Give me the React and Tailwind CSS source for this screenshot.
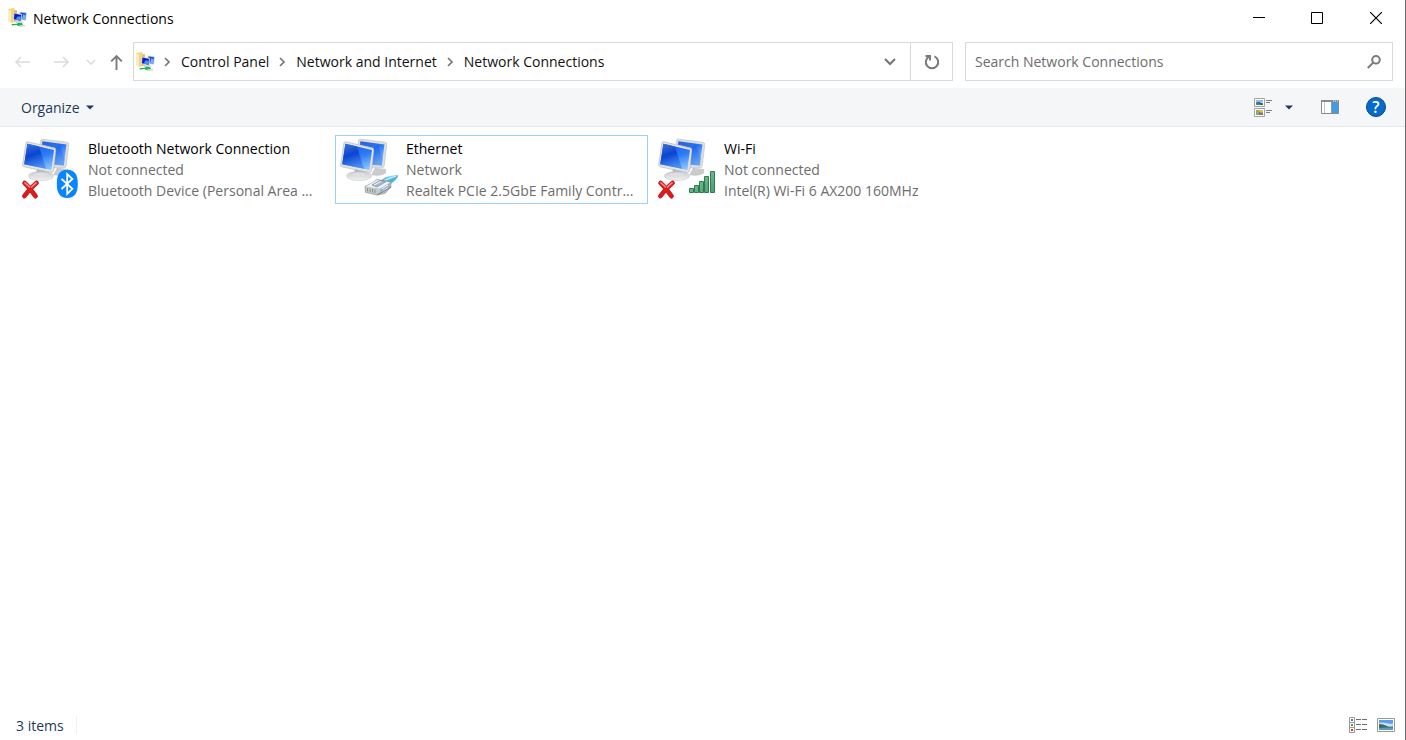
import React from "react";

function Monitors() {
  return (
    <g>
      <path d="M37 31 L48 32 L48 36 Q43 40 33 38 Z" fill="#c9cbcd" />
      <path d="M20.5 3 Q21 1.8 23 2.2 L47 5.2 Q49 5.6 48.8 7.5 L46.3 28.5 Q46 31 43 31 L33 31 L28 10 L20 8 Z" fill="#dcddde" stroke="#b4b6b8" strokeWidth=".5" />
      <path d="M22.4 4.2 L46.4 7.6 L43.8 28.4 L34 27.8 L35.5 11 L22 7.8 Z" fill="url(#backScreen)" />
      <path d="M36 11 L40 6.8 L44.6 22 L43.8 28.4 L34.4 27.8 Z" fill="#0f4ee0" opacity=".3" />
      <path d="M17 31 L26 33 L26.5 39 L16 38 Z" fill="#b0b2b4" />
      <ellipse cx="21" cy="39" rx="12.5" ry="4.6" fill="url(#stand)" stroke="#c0c2c4" strokeWidth=".5" />
      <ellipse cx="21" cy="37.4" rx="7" ry="1.7" fill="#dfe0e1" />
      <path d="M6 5.6 Q6.5 4.3 8 4.8 L34 11 Q36 11.5 35.8 13.5 L33.5 33.8 Q33 36 30.8 35.4 L4 29.8 Q2.3 29.2 2.6 27.6 Z" fill="#e3e4e5" stroke="#b0b2b4" strokeWidth=".6" />
      <path d="M7.4 6.8 L34 13 L31.4 33 L4.2 27.2 Z" fill="url(#frontScreen)" />
      <path d="M7.4 6.8 L19 9.6 L26 31.8 L4.2 27.2 Z" fill="url(#sheen)" />
    </g>
  );
}

function RedCross() {
  return (
    <g strokeLinecap="round" fill="none">
      <path d="M4.6 46 Q9 50 15.5 59.2 M16.5 46 Q10 51 4.4 59" stroke="#bb1a1a" strokeWidth="4.6" />
      <path d="M4.6 46 Q9 50 15.5 59.2 M16.5 46 Q10 51 4.4 59" stroke="#dc1c1c" strokeWidth="3.6" />
      <path d="M5 45.8 L9.5 50 M16 45.8 L11.5 50" stroke="#f28a8a" strokeWidth="1.6" />
    </g>
  );
}

function ConnectionIcon({ kind }) {
  return (
    <svg viewBox="0 0 60 64" className="mt-px h-16 w-15 shrink-0 self-start" aria-hidden="true">
      <Monitors />
      {kind !== "ethernet" && <RedCross />}
      {kind === "bluetooth" && (
        <g>
          <path d="M47.2 32.7 C55 32.7 57.8 38 57.8 46.8 S55 61 47.2 61 S36.8 55.5 36.8 46.8 S39.2 32.7 47.2 32.7 Z" fill="#0a84ff" />
          <path d="M41.5 41.8 L52.4 51.8 L47.2 56.8 V37 L52.4 42 L41.5 52" fill="none" stroke="#fff" strokeWidth="1.8" />
        </g>
      )}
      {kind === "ethernet" && (
        <g strokeLinejoin="round">
          <path d="M43 44 Q46 40 52 39.4 L61 38 L57.5 43 L50 49 Z" fill="#4db7dd" stroke="#8cc6da" strokeWidth=".6" />
          <path d="M46 43.6 L52 41 L58 39.2" fill="none" stroke="#c4f0fb" strokeWidth="1.4" />
          <path d="M27 49.4 L33 46.5 L39 42.5 L52.5 44.8 L53 50 L47 56.4 L39 58 L27.4 55.2 Z" fill="#c3c9d0" stroke="#8d959e" strokeWidth=".7" />
          <path d="M28 49.6 L39 43 L52 45.4 L42 51.6 Z" fill="#eff1f4" />
          <path d="M42 52 L52 46 L52.2 49.6 L46.6 55.6 L42.5 56.6 Z" fill="#a5b4c4" />
          <path d="M34 48 L42 43.4 L48 44.6 L39 50 Z" fill="#a9b8c9" stroke="#71808f" strokeWidth=".6" />
          <path d="M36 48 L43 44.4" stroke="#f7f9fb" strokeWidth="1" />
          <path d="M29.5 51 V54.4 M32 51.5 V55 M34.5 52 V55.5 M37 52.5 V56" stroke="#8c9663" strokeWidth="1" />
          <path d="M44 51.8 L50 48 M44.5 54.6 L50 50.6" stroke="#f4f7fa" strokeWidth="1" />
          <path d="M39 58 L53 50" stroke="#5a6a7c" strokeWidth=".7" />
        </g>
      )}
      {kind === "wifi" && (
        <path
          d="M33.5 51.5 H37.5 V55.5 H33.5 Z M38.5 48.5 H42.5 V55.5 H38.5 Z M43.5 44.5 H47.5 V55.5 H43.5 Z M48.5 39.5 H52.5 V55.5 H48.5 Z M54.5 34.5 H58.5 V55.5 H54.5 Z"
          fill="url(#bars)"
          stroke="#2f7c50"
        />
      )}
    </svg>
  );
}

function Gradients() {
  return (
    <svg className="absolute h-0 w-0" aria-hidden="true">
      <defs>
        <linearGradient id="frontScreen" x1=".3" y1="0" x2=".7" y2="1">
          <stop offset="0" stopColor="#1a5cec" />
          <stop offset=".5" stopColor="#2b7bf8" />
          <stop offset="1" stopColor="#8cc4ff" />
        </linearGradient>
        <linearGradient id="sheen" x1=".2" y1="0" x2=".5" y2="1">
          <stop offset="0" stopColor="#3a70d8" />
          <stop offset=".45" stopColor="#0a44d0" />
          <stop offset="1" stopColor="#4a90f4" />
        </linearGradient>
        <linearGradient id="backScreen" x1="0" y1="0" x2=".6" y2="1">
          <stop offset="0" stopColor="#2a62d8" />
          <stop offset=".5" stopColor="#2a74f2" />
          <stop offset="1" stopColor="#86c0fc" />
        </linearGradient>
        <linearGradient id="stand" x1="0" y1="0" x2="0" y2="1">
          <stop offset="0" stopColor="#c6c8ca" />
          <stop offset="1" stopColor="#f2f2f3" />
        </linearGradient>
        <linearGradient id="bars" x1="0" y1="0" x2="1" y2="1">
          <stop offset="0" stopColor="#8bcaa3" />
          <stop offset="1" stopColor="#4a9d6e" />
        </linearGradient>
      </defs>
    </svg>
  );
}

function FolderIcon({ className = "" }) {
  return (
    <svg viewBox="0 0 20 20" className={`size-5 shrink-0 ${className}`} aria-hidden="true">
      <path d="M0 1 L6 0 L7 2 L9 2.4 V13 L3 15 L0 13 Z" fill="#f0d684" />
      <path d="M0 1 L3 3 V15 L0 13 Z" fill="#fbeebb" />
      <path d="M6 2.4 L9 2.4 V13 L6 14 Z" fill="#dfbd62" />
      <path d="M11.5 3.6 L18.8 4.4 L18 12.6 L12 12 Z" fill="#bfc8d6" />
      <path d="M12.5 4.6 L18 5.2 L17.2 11.6 L13 11 Z" fill="#2350dc" />
      <path d="M15.5 6 L17.8 8 L17.2 11.6 L14 11 Z" fill="#75b4f4" />
      <path d="M5.6 4.4 L14 6.2 L13.4 13.8 L5.2 12 Z" fill="#ccd3de" />
      <path d="M6.4 5.4 L13.2 7 L12.6 12.8 L6 11.2 Z" fill="#0c1cc8" />
      <path d="M9.5 8.6 L13 8.4 L12.6 12.8 L7.5 11.5 Z" fill="#4c92ee" />
      <path d="M8 13.2 L15 13.4 L15.5 14.6 L8 14.8 Z" fill="#c3c8ce" />
      <path d="M3.5 16 L9 15.8 L10 14.8 L14 15 L15 17 L10 18 L8.5 17 L4 17.4 Z" fill="#22b356" />
      <path d="M11 18.3 L17 17.6" stroke="#bcd8c6" strokeWidth="1.2" />
    </svg>
  );
}

function Stroke({ d, w = 16, h = 16, className = "", width = 1 }) {
  return (
    <svg width={w} height={h} viewBox={`0 0 ${w} ${h}`} className={`shrink-0 ${className}`} fill="none" stroke="currentColor" strokeWidth={width} aria-hidden="true">
      <path d={d} />
    </svg>
  );
}

const trail = ["Control Panel", "Network and Internet", "Network Connections"];

const connections = [
  { kind: "bluetooth", name: "Bluetooth Network Connection", status: "Not connected", device: "Bluetooth Device (Personal Area ..." },
  { kind: "ethernet", name: "Ethernet", status: "Network", device: "Realtek PCIe 2.5GbE Family Contr...", selected: true },
  { kind: "wifi", name: "Wi-Fi", status: "Not connected", device: "Intel(R) Wi-Fi 6 AX200 160MHz" },
];

function TitleBar() {
  return (
    <header className="flex h-9 items-center pl-2">
      <FolderIcon />
      <h1 className="ml-1 grow pt-0.5 pl-px text-black">Network Connections</h1>
      <button aria-label="Minimize" className="flex h-9 w-14 items-center justify-center text-black">
        <Stroke w={12} h={12} d="M0 5.5 H12" />
      </button>
      <button aria-label="Maximize" className="flex h-9 w-15 items-center justify-center text-black">
        <Stroke w={12} h={12} d="M.5 .5 H11.5 V11.5 H.5 Z" />
      </button>
      <button aria-label="Close" className="flex h-9 w-[58px] items-center justify-center text-black">
        <Stroke w={12} h={12} width={1.2} d="M0 0 L12 12 M12 0 L0 12" />
      </button>
    </header>
  );
}

function AddressRow() {
  return (
    <div className="flex h-13 py-1.5 pr-3 pl-3.5">
      <nav className="flex items-center" aria-label="History">
        <button aria-label="Back" className="text-[#dcdcdc]">
          <Stroke w={17} width={1.6} d="M16 8 H2 M7 3 L2 8 L7 13" />
        </button>
        <button aria-label="Forward" className="ml-5.5 text-[#dcdcdc]">
          <Stroke w={17} width={1.6} d="M1 8 H15 M10 3 L15 8 L10 13" />
        </button>
        <button aria-label="Recent locations" className="ml-4 text-[#dcdcdc]">
          <Stroke w={10} h={8} width={1.7} d="M1 2 L5 6 L9 2" />
        </button>
        <button aria-label="Up" className="mr-2.5 ml-3.5 text-[#7a7a7a]">
          <Stroke w={13} width={1.9} d="M6.5 16 V2 M1.2 7.3 L6.5 2 L11.8 7.3" />
        </button>
      </nav>
      <div className="flex h-[39px] min-w-0 grow border border-[#d9d9d9]">
        <div className="flex grow items-center pl-0.5">
          <FolderIcon className="-mr-0.5" />
          <ol className="flex items-center text-[#111]">
            {trail.map((name) => (
              <li key={name} className="flex items-center">
                <Stroke w={7} h={10} width={1.6} className="mx-2.5 text-[#727272]" d="M1 1 L5 5 L1 9" />
                <a href="#">{name}</a>
              </li>
            ))}
          </ol>
          <button aria-label="Previous locations" className="mr-3.5 ml-auto text-[#747474]">
            <Stroke w={12} h={8} width={2} d="M1 1 L6 6 L11 1" />
          </button>
        </div>
        <button aria-label="Refresh" className="flex w-[42px] items-center justify-center border-l border-[#d9d9d9] text-[#7a7a7a]">
          <Stroke w={16} width={2} d="M10.5 2.3 A6.2 6.2 0 1 1 5.5 2.3 M1.5 2 H6 V6.5" />
        </button>
      </div>
      <label className="ml-3 flex h-[39px] w-[428px] shrink-0 items-center border border-[#d9d9d9] pr-[11px] pl-[9px]">
        <input aria-label="Search Network Connections" placeholder="Search Network Connections" className="min-w-0 grow bg-transparent outline-none placeholder:text-[#6d6d6d]" />
        <svg width="14" height="14" viewBox="0 0 14 14" fill="none" stroke="#7a7a7a" strokeWidth="2" aria-hidden="true">
          <circle cx="9" cy="4.8" r="3.8" />
          <path d="M6.2 7.6 L.8 13" />
        </svg>
      </label>
    </div>
  );
}

function Triangle() {
  return (
    <svg width="8" height="5" viewBox="0 0 8 5" aria-hidden="true">
      <path d="M0 .5 H8 L4 4.5 Z" fill="#1e395b" />
    </svg>
  );
}

function Toolbar() {
  return (
    <div className="flex h-[39px] items-center border-b border-[#e5e9ee] bg-[#f5f6f7] pr-[19px] pl-[21px] text-[#1e395b]">
      <button className="mr-auto flex items-center gap-1.5">
        <span className="pt-0.5">Organize</span> <Triangle />
      </button>
      <button aria-label="Change your view" className="mr-[13px]">
        <svg width="18" height="19" viewBox="0 0 18 19" aria-hidden="true">
          <path d="M.5 .5 H10.5 V8.5 H.5 Z M.5 10.5 H10.5 V18.5 H.5 Z" fill="#fff" stroke="#a3a3a3" />
          <path d="M2 2 H9 V4.5 H2 Z" fill="#8dbdea" />
          <path d="M2 4.5 L5 4 L9 5.4 V7 H2 Z" fill="#2d5d7c" />
          <path d="M2 5.4 H5 L7 7 H2 Z" fill="#4b8f74" />
          <path d="M2 12 H5 V17 H2 Z" fill="#7ab65c" />
          <path d="M4 12 H7 V15 H4 Z" fill="#e3993f" />
          <path d="M5 14 H9 V17 H5 Z" fill="#8a6a8c" />
          <path d="M6 12 H9 V14.6 H6 Z" fill="#d8c65c" />
          <path d="M12 2.5 H18 M12 4.5 H16 M12 12.5 H18 M12 14.5 H16" stroke="#7f7f7f" />
        </svg>
      </button>
      <button aria-label="More view options" className="mr-7">
        <Triangle />
      </button>
      <button aria-label="Show the preview pane" className="mr-[27px]">
        <svg width="18" height="14" viewBox="0 0 18 14" aria-hidden="true">
          <path d="M.5 .5 H17.5 V13.5 H.5 Z" fill="#fff" stroke="#8a8a8a" />
          <path d="M0 0 H18 V2 H0 Z" fill="#8a8a8a" />
          <path d="M12 1 H13 M14 1 H15 M16 1 H17" stroke="#fff" />
          <path d="M3.5 2 V13" stroke="#c5c5c5" />
          <path d="M10.5 2 H17 V13 H10.5 Z" fill="#419be5" />
          <path d="M10.5 2 V13" stroke="#7f9cb3" />
        </svg>
      </button>
      <button aria-label="Get help" className="flex size-5 items-center justify-center rounded-full border border-[#074b87] bg-[#0669cc] text-[16px] font-semibold text-white">
        ?
      </button>
    </div>
  );
}

function Connection({ item }) {
  return (
    <li className={`flex h-[69px] w-[313px] items-center gap-2 border pl-0.5 ${item.selected ? "border-[#99d1ff]" : "border-transparent"}`}>
      <ConnectionIcon kind={item.kind} />
      <div className="min-w-0 leading-[21px] whitespace-nowrap text-[#6d6d6d]">
        <h2 className="text-black">{item.name}</h2>
        <p>{item.status}</p>
        <p>{item.device}</p>
      </div>
    </li>
  );
}

function StatusBar() {
  return (
    <footer className="flex h-[30px] items-center pr-[10px] pl-4 text-[#1e395b]">
      <span className="mr-auto border-r border-[#f0f0f0] pt-0.5 pr-3 leading-4">3 items</span>
      <button aria-label="Details view" className="mr-2.5">
        <svg width="18" height="16" viewBox="0 0 18 16" aria-hidden="true">
          <path d="M.5 .5 H5.5 V15.5 H.5 Z M.5 5.5 H5.5 M.5 10.5 H5.5" fill="#fff" stroke="#999" />
          <path d="M2 2 H4 V4 H2 Z" fill="#3182a8" />
          <path d="M2 7 H4 V9 H2 Z" fill="#639b32" />
          <path d="M2 12 H4 V14 H2 Z" fill="#d43a24" />
          <path d="M7 2.5 H12 M13 2.5 H18 M7 7.5 H12 M13 7.5 H18 M7 12.5 H12 M13 12.5 H18" stroke="#6d6d6d" />
        </svg>
      </button>
      <button aria-label="Large icons view">
        <svg width="18" height="14" viewBox="0 0 18 14" aria-hidden="true">
          <path d="M.5 .5 H17.5 V13.5 H.5 Z" fill="#fff" stroke="#999" />
          <path d="M2 2 H16 V12 H2 Z" fill="#5b9df0" />
          <path d="M2 5 Q6 3.8 9 5 T16 5.5 V9 H2 Z" fill="#c9e2f6" />
          <path d="M2 6 L6 6.5 L12 8.8 L16 8.4 V10 H2 Z" fill="#3c6c5c" />
          <path d="M2 10 L9 9.6 L16 9.4 V12 H2 Z" fill="#5b9dba" />
        </svg>
      </button>
    </footer>
  );
}

export default function App() {
  return (
    <div className="flex min-h-screen flex-col border-r border-[#6b6b6b] bg-white font-['Open_Sans','Noto_Sans',sans-serif] text-[14px] leading-5">
      <Gradients />
      <TitleBar />
      <AddressRow />
      <Toolbar />
      <main className="grow pt-2 pl-[17px]">
        <ul className="flex flex-wrap gap-[5px]">
          {connections.map((item) => (
            <Connection key={item.kind} item={item} />
          ))}
        </ul>
      </main>
      <StatusBar />
    </div>
  );
}
